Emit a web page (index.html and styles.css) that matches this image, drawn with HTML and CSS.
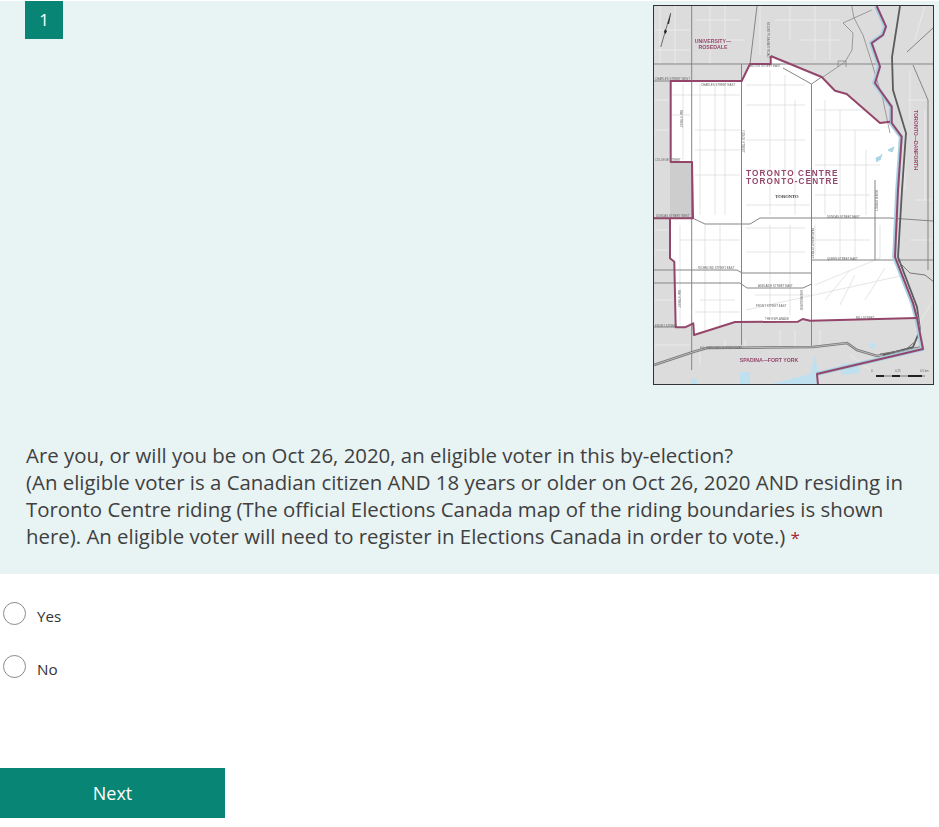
FILE: index.html
```html
<!DOCTYPE html>
<html lang="en">
<head>
<meta charset="utf-8">
<title>Toronto Centre by-election</title>
<link rel="stylesheet" href="styles.css">
</head>
<body>
<main class="form">
  <section class="question">
    <div class="question-top">
      <div class="badge">1</div>
      <svg class="map" viewBox="653 5 281 380" width="281" height="380" role="img" aria-label="Toronto Centre riding map">
        <rect class="land" x="653" y="5" width="281" height="380"/>
        <rect class="block" x="670" y="162" width="22" height="56"/>
        <path class="water" d="M767 385L810 374L815 355L818 373L818 385ZM740 372H750V385H740ZM691 379H697V385H691ZM870 343H875V348H870ZM841 363L860 368V373L841 375Z"/>
        <path class="riding" d="M770.7 56L821.7 77L835 90.7L846.7 94L880 123L890 121.7L901 137L898 190L895 257L913 303L916.7 318L810 320.7L802.7 319L798 321.7L735 322L694 335L693.3 323.3L685 327.3L675.7 327.3L674.3 261.7L670 258.3L670 218.3L693 218.3L692 162L670.7 162L670.7 81L741.7 81.7L750 64L770.7 64Z"/>
        <g class="lane-dark">
          <path d="M672 95H740M672 115H690M695 130H740M695 150H740M695 175H740M700 84V215M715 84V215M725 84V215M683 84V160M746 85H805M746 105H805M746 140H805M746 170H770M746 205H810M770 70V215M785 75V170M795 100V215M815 110H880M815 130H880M815 165H880M815 195H870M815 240H870M825 100V215M840 110V260M855 130V260M866 150V215M680 225V325M680 240H740M705 224V330M720 225V330M746 228H805M746 252H805M770 225V315M790 225V315M700 300H735M695 312H740M755 295H810M746 310L905 275M815 285L880 258M825 300L850 270M840 305L855 275M865 300L885 268M815 225L815 255M880 225V258"/>
        </g>
        <g class="lane-light">
          <path d="M655 30H690M655 50H690M660 5V64M675 5V64M695 20H740M700 40H745M710 5V64M725 5V50M760 5V55M775 20H840M790 5V40M800 40H840M815 5V60M830 20V60M655 100H669M655 130H669M655 230H669M655 250H669M655 300H673M655 345H690M700 345V365M725 340V350M745 340V347M780 330V347M795 330V347M820 330V345M910 70V120M925 110V200M915 200H933M910 240H933M905 150V190M908 100H925M915 330L933 300M925 5L915 40M850 355L870 370"/>
        </g>
        <path class="hood" d="M851.7 6L854 18L863 35L870 57L883 100L890 133M843 23L871.7 10M843 23L853 33L852 50L845 62L823 77M838 67V61H846V67"/>
        <g class="street">
          <path d="M691.7 5V370M741.5 64V345M811.5 84V347M654 64H933M783 68L811.5 84L821.7 77M654 218.3H693L705 224H750L760 218H890L933 221M811.5 260H890L933 260M654 270H737L742 273H811.5M654 283H740L747 288H803L811.5 284M875 180V260M913 65L928 100V270M907 52L933 28M757 6L750 64M654 327H676M670 81H654"/>
        </g>
        <path class="rail" d="M654 365L693 352L707 348L813 347L847 343L857 350L877 356L923 347"/>
        <path class="rail-inner" d="M654 365L693 352L707 348L813 347L847 343L857 350L877 356L923 347"/>
        <path class="highway" d="M900 6L892 57L893 90L906 133L902 190L898 257L917 307L920 330L913 347L883 355"/>
        <path class="highway-thin" d="M897 260L910 273L925 275L934 282M917 340L905 350L880 354"/>
        <path class="river" d="M876.7 6L886 26.7L883 35L871.7 43L880 66.7L875 83L891.7 106.7L891.7 123L901.7 136.7L898 190L895 257L913 303L917 318L923 349L817 374"/>
        <path class="boundary" d="M770.7 56L821.7 77L835 90.7L846.7 94L880 123L890 121.7M654 218.3H693L692 162H670.7V81H741.7L750 64H770.7V56M916.7 318L810 320.7L802.7 319L798 321.7L735 322L694 335L693.3 323.3L685 327.3L675.7 327.3L674.3 261.7L670 258.3V218.3"/>
        <path class="boundary" d="M876.7 6L886 26.7L883 35L871.7 43L880 66.7L875 83L891.7 106.7L891.7 123L901.7 136.7L898 190L895 257L913 303L917 318L923 349L817 374L818 385"/>
        <path class="pond" d="M878 160L882 154L880 160ZM888 150L894 147L892 152ZM876 158L881 156L877 162Z"/>
        <path class="north-line" d="M660.7 47L670.7 13"/>
        <path class="north-head" d="M671 13L669 24L667.5 23.5ZM665 29L667 31L665.5 34L664 32Z"/>
        <g class="scale"><path d="M876 376H925"/><path class="scale-fill" d="M876 376H884M892 376H900M908 376H922"/></g>
        <text class="label ctr" x="713" y="43">UNIVERSITY—</text>
        <text class="label ctr" x="713" y="49">ROSEDALE</text>
        <text class="riding-name" x="746" y="176">TORONTO CENTRE</text>
        <text class="riding-name" x="746" y="184">TORONTO-CENTRE</text>
        <text class="city" x="787" y="198">TORONTO</text>
        <text class="label ctr" x="769" y="362">SPADINA—FORT YORK</text>
        <text class="label" transform="translate(914 110) rotate(90)">TORONTO—DANFORTH</text>
        <text class="tiny" x="655" y="80">CHARLES STREET WEST</text>
        <text class="tiny" x="701" y="86">CHARLES STREET EAST</text>
        <text class="tiny" x="655" y="161">COLLEGE STREET</text>
        <text class="tiny" x="656" y="217">DUNDAS STREET WEST</text>
        <text class="tiny" x="827" y="218">DUNDAS STREET EAST</text>
        <text class="tiny" x="827" y="260">QUEEN STREET EAST</text>
        <text class="tiny" x="698" y="269">RICHMOND STREET EAST</text>
        <text class="tiny" x="758" y="287">ADELAIDE STREET EAST</text>
        <text class="tiny" x="756" y="307">FRONT STREET EAST</text>
        <text class="tiny" x="765" y="320">THE ESPLANADE</text>
        <text class="tiny" x="856" y="319">MILL STREET</text>
        <text class="tiny" x="655" y="327">FRONT STREET</text>
        <text class="tiny" x="700" y="349">F.G. GARDINER EXPRESSWAY</text>
        <text class="tiny" x="750" y="67">BLOOR STREET EAST</text>
        <text class="tiny" transform="translate(767 22) rotate(90)">MOUNT PLEASANT ROAD</text>
        <text class="tiny" transform="translate(742 130) rotate(90)">YONGE STREET</text>
        <text class="tiny" transform="translate(680 110) rotate(90)">BAY STREET</text>
        <text class="tiny" transform="translate(678 290) rotate(90)">BAY STREET</text>
        <text class="tiny" transform="translate(811 228) rotate(90)">PARLIAMENT STREET</text>
        <text class="tiny" transform="translate(875 190) rotate(90)">RIVER STREET</text>
        <text class="tiny" transform="translate(800 290) rotate(90)">SHERBOURNE</text>
        <text class="tiny" x="871" y="372">0</text>
        <text class="tiny" x="895" y="372">0.25</text>
        <text class="tiny" x="920" y="372">0.5 km</text>
      </svg>
    </div>
    <p class="prompt">Are you, or will you be on Oct 26, 2020, an eligible voter in this by-election?<br>(An eligible voter is a Canadian citizen AND 18 years or older on Oct 26, 2020 AND residing in Toronto Centre riding (The official Elections Canada map of the riding boundaries is shown here). An eligible voter will need to register in Elections Canada in order to vote.) <span class="required">*</span></p>
  </section>
  <div class="options">
    <label class="option"><span class="radio"></span><span class="option-text">Yes</span></label>
    <label class="option"><span class="radio"></span><span class="option-text">No</span></label>
  </div>
  <button class="next" type="button">Next</button>
</main>
</body>
</html>
```
FILE: styles.css
```css
* { box-sizing: border-box; }
html, body { margin: 0; background: #fff; }
body {
  font-family: "Open Sans", "Noto Sans", sans-serif;
  color: #333;
}
.form { padding-top: 1px; }
.question {
  background: #e8f3f4;
  height: 573px;
  padding: 0 5px 0 26px;
}
.question-top {
  display: flex;
  justify-content: space-between;
  align-items: flex-start;
}
.badge {
  width: 38px;
  height: 38px;
  margin-left: -1px;
  background: #088575;
  color: #fff;
  font-size: 17px;
  line-height: 38px;
  text-align: center;
}
.map {
  display: block;
  margin-top: 4px;
  outline: 1px solid #333;
  outline-offset: -1px;
  filter: blur(0.45px);
}
path { fill: none; }
.land { fill: #dcdcdc; }
.block { fill: #cdcdcd; }
.riding { fill: #fff; }
.water { fill: #bfe0ee; }
.pond { fill: #a9d5e6; stroke: #a9d5e6; stroke-width: 1; }
.lane-dark path { stroke: #dadada; stroke-width: 0.7; }
.lane-light path { stroke: #eeeeee; stroke-width: 0.8; }
.hood { stroke: #7c7c7c; stroke-width: 0.7; }
.street path { stroke: #858585; stroke-width: 1; }
.rail { stroke: #777; stroke-width: 2.6; }
.rail-inner { stroke: #d5d5d5; stroke-width: 0.7; }
.highway { stroke: #5b5b5b; stroke-width: 1.8; }
.highway-thin { stroke: #777; stroke-width: 1; }
.river { stroke: #a6d0e4; stroke-width: 4; transform: translateX(-0.8px); }
.boundary { stroke: #93466a; stroke-width: 2; stroke-linejoin: round; }
.north-line { stroke: #222; stroke-width: 0.6; }
.north-head { fill: #222; }
.scale path { stroke: #aaa; stroke-width: 2; }
.scale .scale-fill { stroke: #222; }
.label, .riding-name, .tiny { font-family: "Liberation Sans", sans-serif; }
.label { font-size: 5.2px; font-weight: 700; fill: #93466a; }
.ctr { text-anchor: middle; }
.riding-name { font-size: 8.2px; font-weight: 700; letter-spacing: 1.15px; fill: #93466a; }
.city { font-family: "Liberation Serif", serif; font-size: 4.6px; font-weight: 700; fill: #333; text-anchor: middle; }
.tiny { font-size: 2.9px; fill: #666; }
.prompt {
  margin: 0;
  padding-top: 57px;
  width: 886px;
  font-size: 20.4px;
  line-height: 27px;
  color: #404040;
}
.required { color: #a4262c; font-size: 17px; }
.options {
  display: flex;
  flex-direction: column;
  gap: 31px;
  padding: 28px 0 0 3px;
}
.option {
  display: flex;
  align-items: center;
  gap: 11px;
  height: 22px;
  font-size: 15.2px;
  color: #333;
}
.option-text { padding-top: 5px; }
.radio {
  width: 23px;
  height: 23px;
  border: 1px solid #8a8a8a;
  border-radius: 50%;
  background: #fff;
}
.next {
  display: block;
  width: 225px;
  height: 50px;
  margin-top: 91px;
  padding: 0;
  border: 0;
  background: #088575;
  color: #fff;
  font-family: inherit;
  font-size: 18px;
}
```
